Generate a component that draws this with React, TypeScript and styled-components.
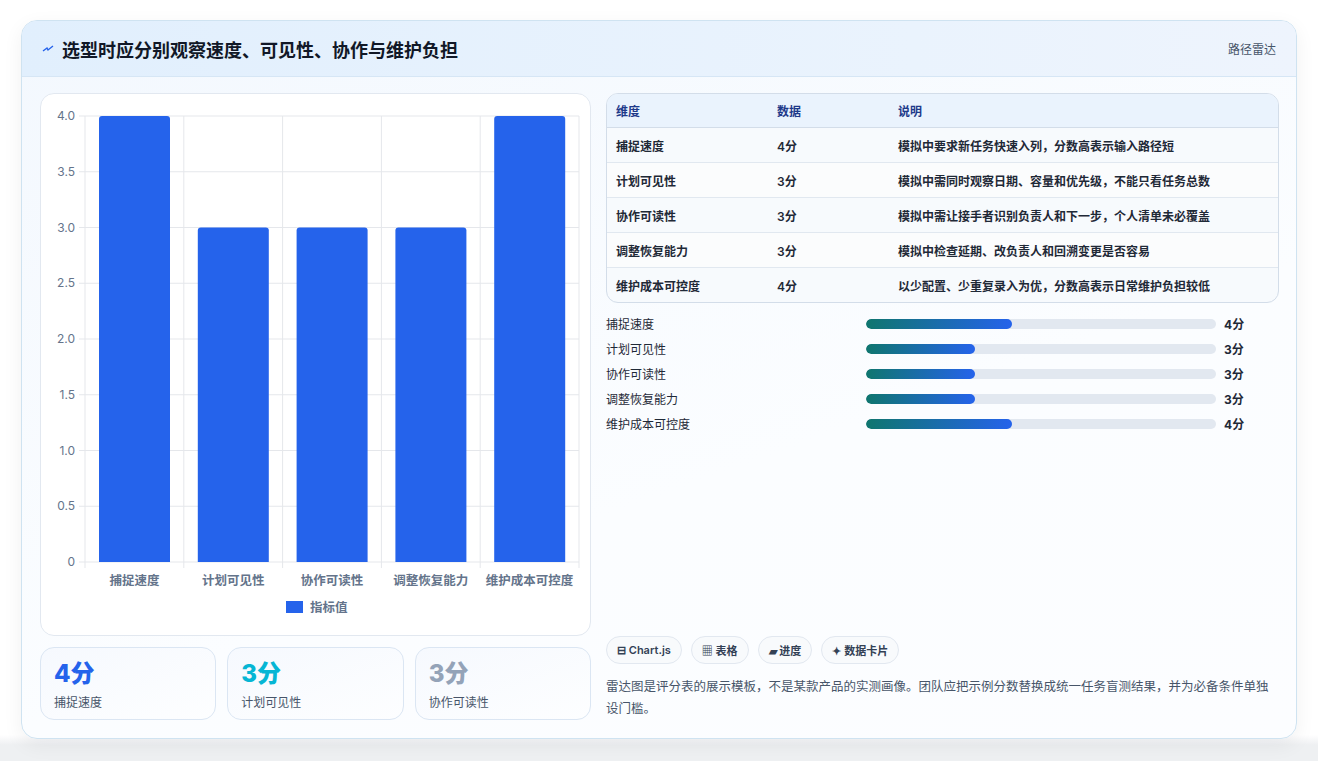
import React from 'react'
import styled, { createGlobalStyle } from 'styled-components'

const Global = createGlobalStyle`
  html, body { margin: 0; background: #f1f2f4; }
  body { font-family: Inter, "Noto Sans CJK SC", sans-serif; color: #1e293b; }
`

const Page = styled.div`
  width: 1318px;
  height: 761px;
  padding: 20px 21px 0 21px;
  box-sizing: border-box;
  background: linear-gradient(#fff 0, #fff 735px, #eef0f2 745px);
`

const Card = styled.div`
  height: 719px;
  box-sizing: border-box;
  border: 1px solid #cfe3f1;
  border-radius: 16px;
  overflow: hidden;
  background: linear-gradient(160deg, #f3f8fe, #fbfdff 60%, #fcfdff);
  box-shadow: 0 6px 20px rgba(15, 23, 42, 0.06);
  display: flex;
  flex-direction: column;
`

const Header = styled.div`
  height: 55px;
  flex: none;
  display: flex;
  align-items: center;
  justify-content: space-between;
  padding: 0 20px 0 20px;
  background: linear-gradient(90deg, #e1effd, #eaf3fd 70%, #eef4fd);
  border-bottom: 1px solid #d6e6f5;
`

const Title = styled.h1`
  margin: 0;
  font-size: 18px;
  font-weight: 700;
  color: #111827;
  display: flex;
  align-items: center;
  gap: 8px;
`

const Tag = styled.span`
  font-size: 12px;
  color: #475569;
`

const Body = styled.div`
  flex: 1;
  display: grid;
  grid-template-columns: 551px 673px;
  gap: 15px;
  padding: 16px 18px 18px 18px;
`

const Left = styled.div`
  display: flex;
  flex-direction: column;
  gap: 11px;
`

const ChartPanel = styled.div`
  height: 543px;
  box-sizing: border-box;
  border: 1px solid #e2e8f0;
  border-radius: 14px;
  background: #fff;
`

const Stats = styled.div`
  display: grid;
  grid-template-columns: repeat(3, 1fr);
  gap: 11px;
`

const Stat = styled.div`
  height: 73px;
  box-sizing: border-box;
  border: 1px solid #dbe6f3;
  border-radius: 14px;
  background: linear-gradient(160deg, #f6f9fe, #fdfeff);
  padding: 12px 13px;
`

const StatValue = styled.div<{ $c: string }>`
  font-size: 24px;
  font-weight: 800;
  color: ${p => p.$c};
  line-height: 28px;
`

const StatLabel = styled.div`
  font-size: 12px;
  color: #475569;
  margin-top: 5px;
`

const Right = styled.div`
  display: flex;
  flex-direction: column;
`

const Table = styled.table`
  width: 100%;
  border-collapse: separate;
  border-spacing: 0;
  border: 1px solid #d3dde9;
  border-radius: 12px;
  overflow: hidden;
  font-size: 12px;
  background: #f7fafd;
  th {
    text-align: left;
    height: 33px;
    padding: 0 9px;
    font-weight: 700;
    color: #1e3a8a;
    background: #eaf3fd;
    border-bottom: 1px solid #d3dde9;
  }
  td {
    height: 34px;
    padding: 0 9px;
    font-weight: 600;
    color: #1f2937;
    border-bottom: 1px solid #e1e8f0;
  }
  tr:nth-child(even) td { background: #fbfcfd; }
  tr:last-child td { border-bottom: none; }
`

const Bars = styled.div`
  margin-top: 12px;
  display: flex;
  flex-direction: column;
  gap: 10px;
`

const BarRow = styled.div`
  display: grid;
  grid-template-columns: 252px 350px 1fr;
  gap: 0 8px;
  align-items: center;
  font-size: 12px;
  height: 15px;
  color: #1f2937;
  span:last-child { font-weight: 700; padding-left: 0; }
`

const Track = styled.div`
  height: 10px;
  border-radius: 5px;
  background: #e2e8f0;
  overflow: hidden;
`

const Fill = styled.div`
  height: 100%;
  border-radius: 5px;
  background: linear-gradient(90deg, #0f766e, #2563eb);
`

const Spacer = styled.div` flex: 1; `

const Chips = styled.div`
  display: flex;
  gap: 9px;
`

const Chip = styled.span`
  height: 28px;
  padding: 0 10px;
  box-sizing: border-box;
  border: 1px solid #e2e8f0;
  border-radius: 14px;
  background: #f8fafc;
  display: inline-flex;
  align-items: center;
  font-size: 11px;
  font-weight: 600;
  color: #334155;
`

const Note = styled.p`
  margin: 12px 0 0;
  font-size: 12.5px;
  line-height: 22px;
  color: #475569;
  padding-right: 10px;
`

const data = [
  { name: '捕捉速度', v: 4, note: '模拟中要求新任务快速入列，分数高表示输入路径短' },
  { name: '计划可见性', v: 3, note: '模拟中需同时观察日期、容量和优先级，不能只看任务总数' },
  { name: '协作可读性', v: 3, note: '模拟中需让接手者识别负责人和下一步，个人清单未必覆盖' },
  { name: '调整恢复能力', v: 3, note: '模拟中检查延期、改负责人和回溯变更是否容易' },
  { name: '维护成本可控度', v: 4, note: '以少配置、少重复录入为优，分数高表示日常维护负担较低' },
]

const BarChart = () => {
  const x0 = 44, x1 = 538, y0 = 22, y1 = 468
  const unit = (y1 - y0) / 4
  const col = (x1 - x0) / 5
  const ticks = [0, 0.5, 1, 1.5, 2, 2.5, 3, 3.5, 4]
  return (
    <svg width="549" height="541" style={{ display: 'block' }}>
      {ticks.map(t => {
        const y = y1 - t * unit
        return (
          <g key={t}>
            <line x1={x0 - 6} x2={x1} y1={y} y2={y} stroke="#e5e7eb" />
            <text x={x0 - 10} y={y + 4} textAnchor="end" fontSize="12" fill="#64748b" fontFamily="Inter, sans-serif">
              {t === 0 ? '0' : t.toFixed(1)}
            </text>
          </g>
        )
      })}
      {[0, 1, 2, 3, 4, 5].map(i => (
        <line key={i} x1={x0 + i * col} x2={x0 + i * col} y1={y0} y2={y1 + 6} stroke="#e5e7eb" />
      ))}
      {data.map((d, i) => {
        const bx = x0 + i * col + 14
        const h = d.v * unit
        return (
          <g key={d.name}>
            <path d={`M${bx} ${y1} V${y1 - h + 3} Q${bx} ${y1 - h} ${bx + 3} ${y1 - h} H${bx + 68} Q${bx + 71} ${y1 - h} ${bx + 71} ${y1 - h + 3} V${y1} Z`} fill="#2563eb" />
            <text x={x0 + i * col + col / 2} y={y1 + 23} textAnchor="middle" fontSize="12.5" fontWeight="600" fill="#64748b" fontFamily='"Noto Sans CJK SC", sans-serif'>{d.name}</text>
          </g>
        )
      })}
      <rect x="245" y="507" width="17" height="12" fill="#2563eb" />
      <text x="269" y="518" fontSize="12.5" fontWeight="600" fill="#64748b" fontFamily='"Noto Sans CJK SC", sans-serif'>指标值</text>
    </svg>
  )
}

export default function App() {
  return (
    <Page>
      <Global />
      <Card>
        <Header>
          <Title>
            <svg width="12" height="10" viewBox="0 0 12 10"><path d="M1 7 L5 4 L6 6 L11 2" stroke="#2563eb" strokeWidth="1.4" fill="none" /></svg>
            选型时应分别观察速度、可见性、协作与维护负担
          </Title>
          <Tag>路径雷达</Tag>
        </Header>
        <Body>
          <Left>
            <ChartPanel><BarChart /></ChartPanel>
            <Stats>
              <Stat><StatValue $c="#2563eb">4分</StatValue><StatLabel>捕捉速度</StatLabel></Stat>
              <Stat><StatValue $c="#06b6d4">3分</StatValue><StatLabel>计划可见性</StatLabel></Stat>
              <Stat><StatValue $c="#94a3b8">3分</StatValue><StatLabel>协作可读性</StatLabel></Stat>
            </Stats>
          </Left>
          <Right>
            <Table>
              <thead>
                <tr><th style={{ width: 143 }}>维度</th><th style={{ width: 103 }}>数据</th><th>说明</th></tr>
              </thead>
              <tbody>
                {data.map(d => (
                  <tr key={d.name}><td>{d.name}</td><td>{d.v}分</td><td>{d.note}</td></tr>
                ))}
              </tbody>
            </Table>
            <Bars>
              {data.map(d => (
                <BarRow key={d.name}>
                  <span>{d.name}</span>
                  <Track><Fill style={{ width: `${d.v === 4 ? 41.7 : 31.2}%` }} /></Track>
                  <span>{d.v}分</span>
                </BarRow>
              ))}
            </Bars>
            <Spacer />
            <Chips>
              <Chip>⊟ Chart.js</Chip>
              <Chip>▦ 表格</Chip>
              <Chip>▰ 进度</Chip>
              <Chip>✦ 数据卡片</Chip>
            </Chips>
            <Note>雷达图是评分表的展示模板，不是某款产品的实测画像。团队应把示例分数替换成统一任务盲测结果，并为必备条件单独设门槛。</Note>
          </Right>
        </Body>
      </Card>
    </Page>
  )
}
